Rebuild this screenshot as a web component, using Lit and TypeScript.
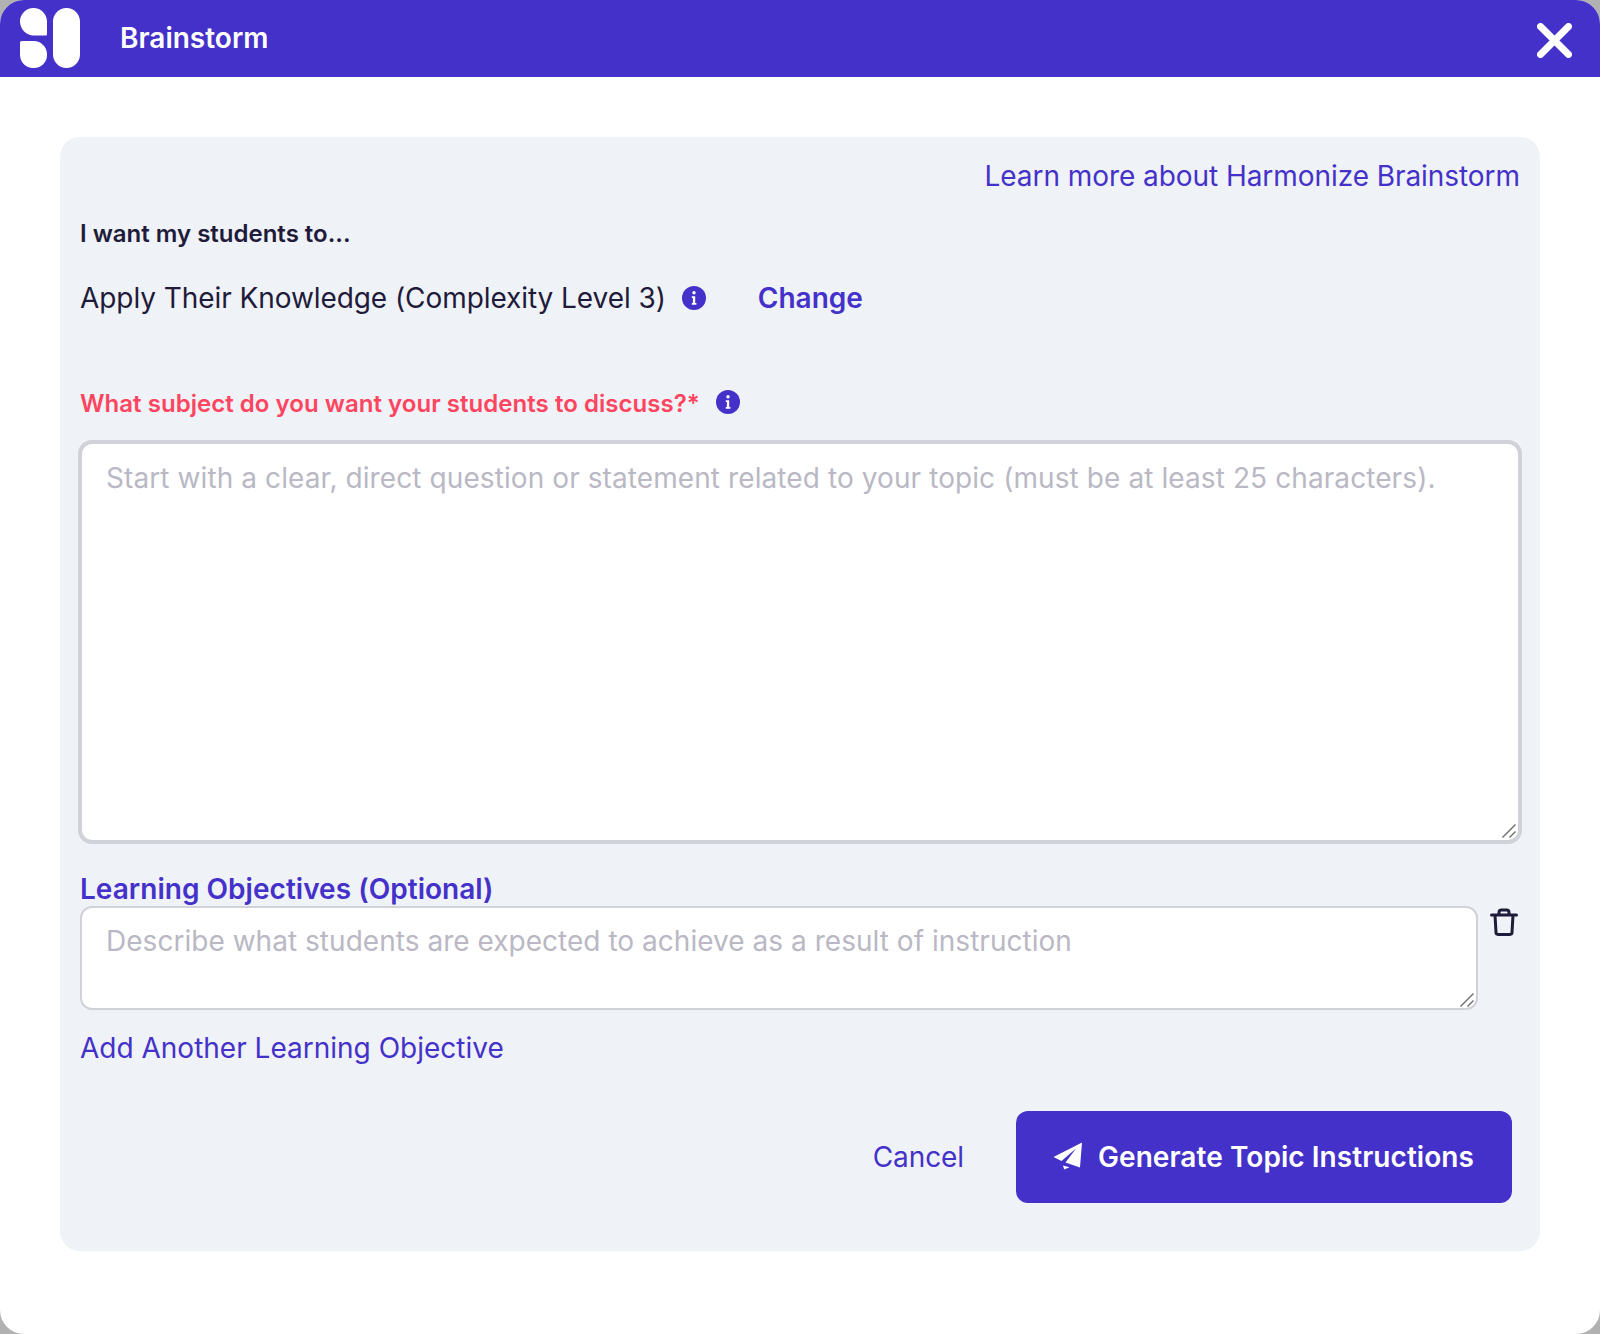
import { LitElement, html, css } from "lit";
import { customElement } from "lit/decorators.js";

const info = html`<svg class="info" viewBox="0 0 24 24" aria-hidden="true"><circle cx="12" cy="12" r="12" fill="#4431c9"/><circle cx="12" cy="6.800" r="1.700" fill="#fff"/><path d="M9.800 10.200h3.400v6.800h1.200v1.800H9.800V17h1.100v-5h-1.100z" fill="#fff"/></svg>`;
const grip = html`<svg class="grip" viewBox="0 0 14 14" aria-hidden="true"><path d="M.5 13.500 13.500.5M7.500 13.500l6-6" fill="none" stroke="#6a6a6a" stroke-width="1.400"/></svg>`;

@customElement("app-root")
export class AppRoot extends LitElement {
  static styles = css`
    :host { display: block; width: 1600px; height: 1334px; background: #b1b1b1; font-family: Inter, "Liberation Sans", sans-serif; color: #1f1b3a; }
    * { box-sizing: border-box; }
    .window { width: 1600px; height: 1334px; background: #fff; border-radius: 24px; overflow: hidden; display: flex; flex-direction: column; }
    .head { height: 77px; background: #4431c9; display: flex; align-items: center; color: #fff; padding: 0 28px 0 20px; flex: none; }
    .logo { width: 60px; height: 60px; flex: none; margin-top: -1px; }
    .title { font-size: 28px; font-weight: 600; margin-left: 40px; flex: 1; margin-top: -1px; }
    .close { width: 35px; height: 35px; flex: none; margin-top: 4px; margin-right: 0; }
    .card { margin: 60px 60px 0; height: 1114px; background: #eff2f7; border-radius: 20px; padding: 20px; display: flex; flex-direction: column; }
    .learn { align-self: flex-end; color: #4431c9; font-size: 28px; line-height: 36px; letter-spacing: -0.06px; margin-top: 1px; }
    .want { font-size: 24px; font-weight: 600; line-height: 32px; margin-top: 24px; }
    .level { display: flex; align-items: center; font-size: 28px; line-height: 36px; margin-top: 30px; }
    .level > span:first-child { letter-spacing: -0.07px; }
    .info { width: 24px; height: 24px; flex: none; }
    .level .info { margin-left: 16px; }
    .change { color: #4431c9; font-weight: 600; margin-left: 52px; }
    .subject { display: flex; align-items: center; color: #fd4560; font-size: 24px; font-weight: 600; line-height: 32px; margin-top: 72px; letter-spacing: 0.04px; }
    .subject .info { margin-left: 16px; margin-top: -4px; }
    .field { position: relative; display: block; }
    .box { display: block; resize: none; background: #fff; width: 100%; height: 100%; font: inherit; font-size: 28px; line-height: 36px; color: #1f1b3a; outline: none; }
    .box::placeholder { color: #b9b8c4; opacity: 1; }
    .field-main { height: 404px; margin: 20px -2px 0; }
    .field-main .box { border: 4px solid #d1d1d9; border-radius: 14px; padding: 16px 24px; letter-spacing: 0.09px; }
    .grip { position: absolute; width: 14px; height: 14px; pointer-events: none; }
    .field-main .grip { right: 6px; bottom: 6px; }
    .lo { color: #4431c9; font-size: 28px; font-weight: 600; line-height: 34px; margin-top: 28px; letter-spacing: 0.03px; }
    .row { display: flex; gap: 8px; align-items: flex-start; }
    .field-second { width: 1398px; height: 104px; flex: none; }
    .field-second .box { border: 2px solid #d1d1d9; border-radius: 12px; padding: 15px 24px; letter-spacing: 0.03px; }
    .field-second .grip { right: 4px; bottom: 3px; }
    .trash { width: 36px; height: 36px; flex: none; }
    .add { color: #4431c9; font-size: 28px; line-height: 36px; margin-top: 20px; }
    .actions { display: flex; align-items: center; justify-content: flex-end; margin-top: 45px; padding-right: 8px; }
    .cancel { color: #4431c9; font-size: 28px; margin-right: 52px; letter-spacing: -0.1px; }
    .go { height: 92px; width: 496px; background: #4431c9; color: #fff; border-radius: 12px; display: flex; align-items: center; padding-left: 37px; gap: 15px; font-size: 28px; font-weight: 600; letter-spacing: 0.06px; }
    .plane { width: 30px; height: 28px; flex: none; margin-top: -3px; }
  `;
  render() {
    return html`<div class="window">
      <header class="head">
        <svg class="logo" viewBox="0 0 60 60" aria-hidden="true"><path fill="#fff" d="M0 13.500C0 6 6 0 13.500 0S27 6 27 13.500V26.500a1 1 0 0 1-1 1H13.500C6 27.500 0 21 0 13.500zM1.500 33H14C21 33 27 39 27 46v1.500C27 54 21.500 60 14 60h-1C6 60 0 54 0 47V34.500a1.500 1.500 0 0 1 1.500-1.500zM33 13.500C33 6 39 0 46.500 0S60 6 60 13.500V46.500C60 54 54 60 46.500 60S33 54 33 46.500z"/></svg>
        <div class="title">Brainstorm</div>
        <svg class="close" viewBox="0 0 35 35" aria-hidden="true"><path d="M3.500 3.500l28 28M31.500 3.500l-28 28" stroke="#fff" stroke-width="7" stroke-linecap="round"/></svg>
      </header>
      <section class="card">
        <div class="learn">Learn more about Harmonize Brainstorm</div>
        <div class="want">I want my students to...</div>
        <div class="level"><span>Apply Their Knowledge (Complexity Level 3)</span>${info}<span class="change">Change</span></div>
        <div class="subject"><span>What subject do you want your students to discuss?*</span>${info}</div>
        <div class="field field-main">
          <textarea class="box" placeholder="Start with a clear, direct question or statement related to your topic (must be at least 25 characters)."></textarea>
          ${grip}
        </div>
        <div class="lo">Learning Objectives (Optional)</div>
        <div class="row">
          <div class="field field-second">
            <textarea class="box" placeholder="Describe what students are expected to achieve as a result of instruction"></textarea>
            ${grip}
          </div>
          <svg class="trash" viewBox="0 0 36 36" aria-hidden="true"><path d="M5.500 9h25M9 9l1 17.500a2 2 0 0 0 2 1.900h12a2 2 0 0 0 2-1.900L27 9M13 9V6.500A2.500 2.500 0 0 1 15.500 4h5A2.500 2.500 0 0 1 23 6.500V9" fill="none" stroke="#1f1b3a" stroke-width="3" stroke-linecap="round" stroke-linejoin="round"/></svg>
        </div>
        <div class="add">Add Another Learning Objective</div>
        <div class="actions">
          <span class="cancel">Cancel</span>
          <div class="go">
            <svg class="plane" viewBox="0 0 30 28" aria-hidden="true"><path fill="#fff" d="M29 .5.500 15l8 4L23 6.500 12.500 20.500 27 25.500zM10 23.500l1.200 4 5.300-2.200z"/></svg>
            <span>Generate Topic Instructions</span>
          </div>
        </div>
      </section>
    </div>`;
  }
}
